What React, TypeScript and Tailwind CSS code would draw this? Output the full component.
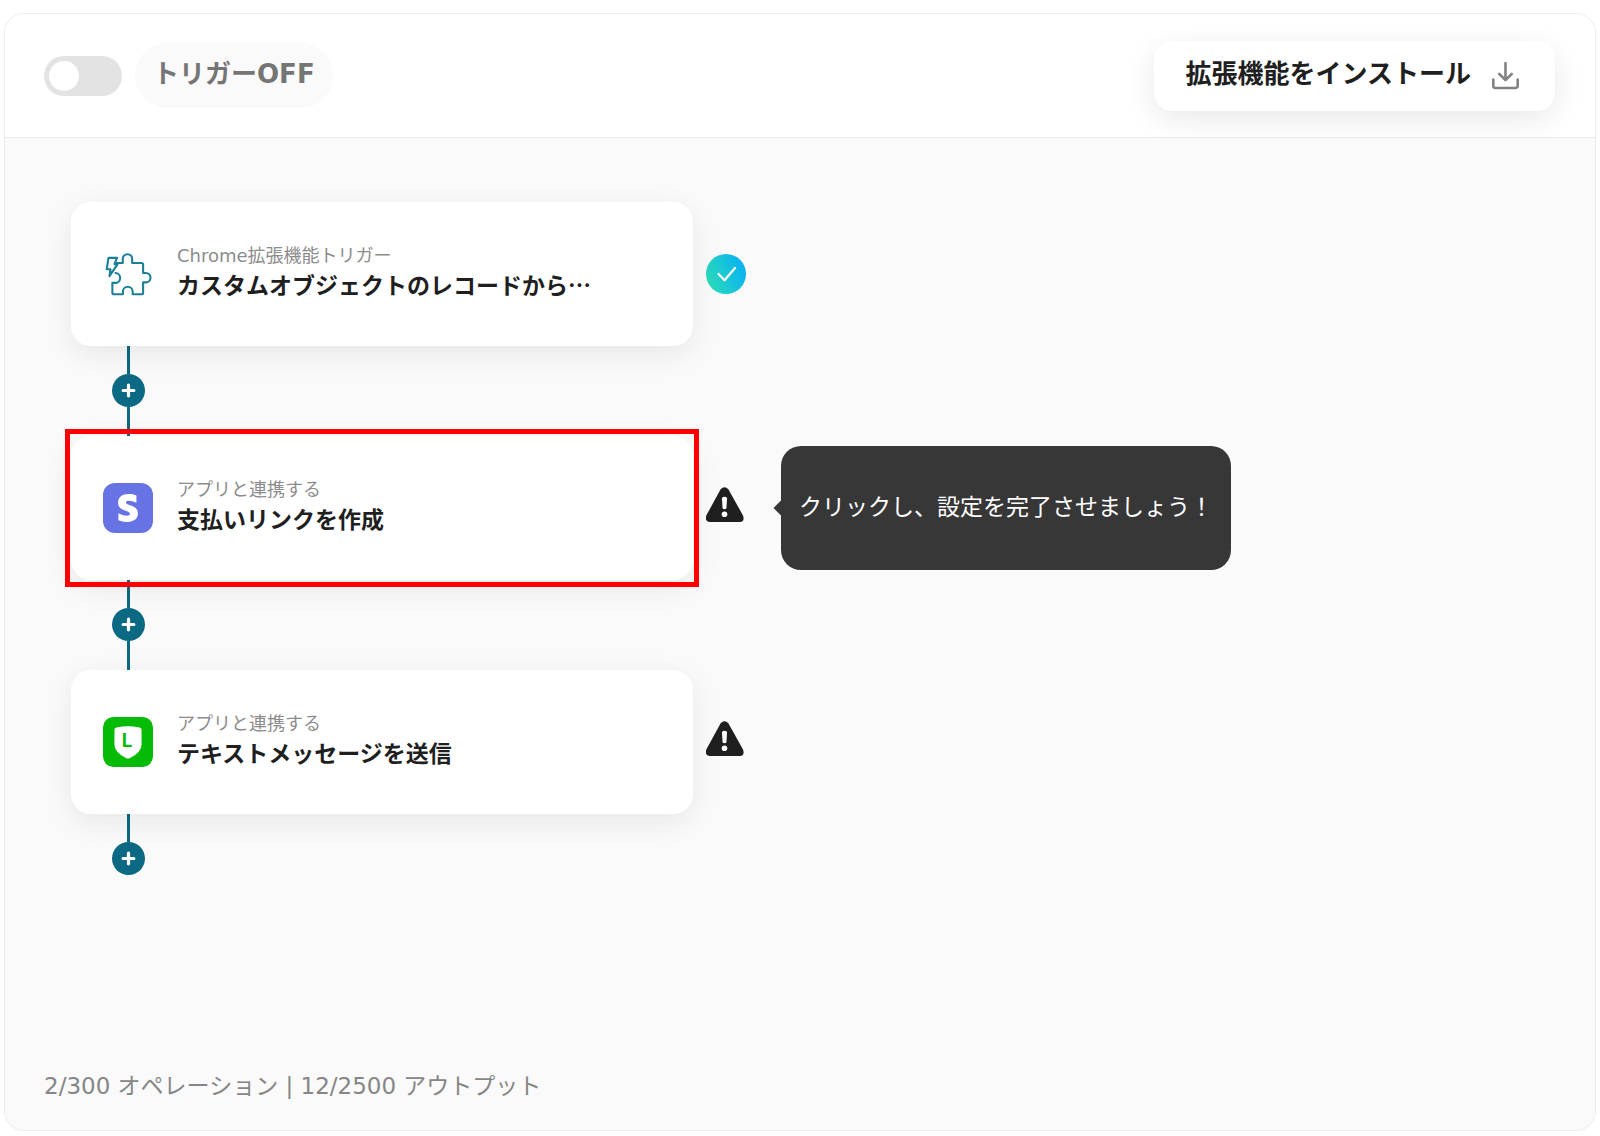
import { useState } from 'react'
import type { ReactNode } from 'react'
import { FaStripeS } from 'react-icons/fa6'

type Step = {
  id: string
  kind: string
  title: string
  icon: ReactNode
  done?: boolean
  selected?: boolean
  hint?: string
}

const STEPS: Step[] = [
  {
    id: 'trigger',
    kind: 'Chrome拡張機能トリガー',
    title: 'カスタムオブジェクトのレコードから…',
    icon: <PuzzleIcon />,
    done: true,
  },
  {
    id: 'stripe',
    kind: 'アプリと連携する',
    title: '支払いリンクを作成',
    icon: (
      <span className="flex size-[50px] items-center justify-center rounded-xl bg-[#6772e5]">
        <FaStripeS className="size-7 text-white" />
      </span>
    ),
    selected: true,
    hint: 'クリックし、設定を完了させましょう！',
  },
  {
    id: 'line',
    kind: 'アプリと連携する',
    title: 'テキストメッセージを送信',
    icon: <ShieldIcon />,
  },
]

export default function App() {
  const [enabled, setEnabled] = useState(false)

  return (
    <div className="flex min-h-screen flex-col bg-white px-1 pt-[13px] pb-[5px] font-['DejaVu_Sans','Noto_Sans_CJK_JP',sans-serif]">
      <main className="flex flex-1 flex-col overflow-hidden rounded-[20px] border border-[#eeeeee] bg-[#fafafa]">
        <header className="flex h-[124px] items-center justify-between border-b border-[#ececec] bg-white pr-10 pl-[39px]">
          <div className="flex items-center gap-[13px]">
            <input
              id="trigger-switch"
              type="checkbox"
              role="switch"
              checked={enabled}
              onChange={(e) => setEnabled(e.target.checked)}
              className="h-10 w-[78px] cursor-pointer appearance-none rounded-full bg-[#e3e3e3] p-[5px] before:block before:size-[30px] before:rounded-full before:bg-white checked:bg-[#0b6983] checked:before:ml-auto"
            />
            <label
              htmlFor="trigger-switch"
              className="rounded-full bg-[#fafafa] px-[18px] pt-[13px] pb-4 text-[26px] leading-9 font-bold text-[#757575]"
            >
              トリガー{enabled ? 'ON' : 'OFF'}
            </label>
          </div>
          <button
            type="button"
            className="flex h-[70px] items-center gap-5 rounded-[18px] bg-white pr-9 pl-8 shadow-[0_8px_30px_rgba(0,0,0,0.09)]"
          >
            <span className="pb-[3px] text-[26px] leading-9 font-bold text-[#1f1f1f]">
              拡張機能をインストール
            </span>
            <DownloadIcon />
          </button>
        </header>

        <ol className="flex flex-col pt-16 pl-[66px]">
          {STEPS.map((step) => (
            <StepRow key={step.id} step={step} last={step.id === STEPS[STEPS.length - 1].id} />
          ))}
        </ol>

        <footer className="mt-auto px-[39px] pt-10 pb-[26px] text-[23px] leading-9 text-[#868686]">
          2/300 オペレーション | 12/2500 アウトプット
        </footer>
      </main>
    </div>
  )
}

function StepRow({ step, last }: { step: Step; last: boolean }) {
  return (
    <li>
      <div className="flex items-center">
        <div className="relative w-[622px]">
          <button
            type="button"
            className="flex h-36 w-full items-center gap-6 rounded-[20px] bg-white px-8 text-left shadow-[0_8px_30px_rgba(0,0,0,0.08)]"
          >
            <span className="flex size-[50px] shrink-0 items-center justify-center">
              {step.icon}
            </span>
            <span className="flex min-w-0 flex-col pb-2">
              <span className="text-[18px] leading-7 text-[#8c8c8c]">{step.kind}</span>
              <span className="font-['Noto_Sans_CJK_JP',sans-serif] text-[23px] leading-7 font-bold whitespace-nowrap text-[#1f1f1f]">
                {step.title}
              </span>
            </span>
          </button>
          {step.selected && (
            <span className="pointer-events-none absolute -inset-x-1.5 -inset-y-[7px] z-10 border-5 border-[#ff0000]" />
          )}
        </div>
        <span className="ml-[13px] flex w-10 justify-center">
          {step.done ? <DoneIcon /> : <WarningIcon />}
        </span>
        {step.hint && (
          <div
            role="tooltip"
            className="relative ml-[35px] flex h-[124px] items-center rounded-[20px] bg-[#373737] px-[18px] pb-0.5 text-[23px] whitespace-nowrap text-white"
          >
            <span className="absolute top-1/2 -left-[5px] size-3 -translate-y-1/2 rotate-45 bg-[#373737]" />
            {step.hint}
          </div>
        )}
      </div>
      <Connector last={last} />
    </li>
  )
}

/* Line below a card, with the button that inserts another step */
function Connector({ last }: { last: boolean }) {
  return (
    <div className="ml-10 flex h-[90px] w-[35px] flex-col items-center">
      <span className="h-7 w-[3px] bg-[#0b6983]" />
      <button
        type="button"
        aria-label="ステップを追加"
        className="flex size-[33px] items-center justify-center rounded-full bg-[#0b6983]"
      >
        <svg viewBox="0 0 14 14" className="size-[15px]" fill="none" stroke="#fff" strokeWidth="3">
          <path d="M7 2v10M2 7h10" strokeLinecap="round" />
        </svg>
      </button>
      {!last && <span className="w-[3px] flex-1 bg-[#0b6983]" />}
    </div>
  )
}

/* ---------- Icons ---------- */

function DownloadIcon() {
  return (
    <svg
      viewBox="0 0 28 28"
      className="size-7"
      fill="none"
      stroke="#828282"
      strokeWidth="2.6"
      strokeLinecap="round"
      strokeLinejoin="round"
    >
      <path d="M14.500 1v16.500M8.300 12l6.200 6 6.200-6" />
      <path d="M2.300 17.500v6.200a2.300 2.300 0 0 0 2.300 2.300h19.800a2.300 2.300 0 0 0 2.300-2.300v-6.200" />
    </svg>
  )
}

function PuzzleIcon() {
  return (
    <svg
      viewBox="0 0 48 48"
      className="size-[50px]"
      fill="none"
      stroke="#1a7f97"
      strokeWidth="2"
      strokeLinejoin="round"
      strokeLinecap="round"
    >
      <path d="M13 13.500h6v-4a4.500 4.500 0 0 1 9 0v4h9a1.500 1.500 0 0 1 1.500 1.500v8h2.600a4.500 4.500 0 0 1 0 9h-2.600v10a1.500 1.500 0 0 1-1.500 1.500h-8.500v-2.500a4.700 4.700 0 0 0-9.400 0v2.500h-8.600a1.500 1.500 0 0 1-1.500-1.500v-9.500h2.500a4.700 4.700 0 0 0 .5-9.400" />
      <path d="M5.300 8.500h8.200l-2.500 6h3l-7.800 11.500 1-6.500h-3.700z" />
    </svg>
  )
}

function ShieldIcon() {
  return (
    <svg viewBox="0 0 48 48" className="size-[50px]">
      <rect width="48" height="48" rx="10" fill="#06bb06" />
      <path
        d="M11 12.300Q11 10.400 13 10q11-2.400 22 0 2 .4 2 2.300v14.200q0 3.500-2.500 6.500-3.500 4-9 6.600-1.500.7-3 0-5.500-2.600-9-6.600-2.500-3-2.500-6.500z"
        fill="#fff"
      />
      <text
        x="18"
        y="29"
        fill="#06bb06"
        className="font-['Inter',sans-serif] text-[18px] font-bold"
      >
        L
      </text>
    </svg>
  )
}

function DoneIcon() {
  return (
    <svg viewBox="0 0 40 40" className="size-10">
      <defs>
        <linearGradient id="done" x1="0" y1="0.7" x2="1" y2="0.3">
          <stop offset="0" stopColor="#2bdcb8" />
          <stop offset="1" stopColor="#08b0f5" />
        </linearGradient>
      </defs>
      <circle cx="20" cy="20" r="20" fill="url(#done)" />
      <path
        d="M12.500 20l6 6.300L29 14"
        fill="none"
        stroke="#fff"
        strokeWidth="2.200"
        strokeLinecap="round"
        strokeLinejoin="round"
      />
    </svg>
  )
}

function WarningIcon() {
  return (
    <svg viewBox="0 0 40 44" className="h-11 w-10">
      <path
        d="M14.500 3.500Q18.500 -1 22.500 3.500L37 29.500Q39 35.500 34 36H3.500Q-1.500 35.500.3 29.500z"
        fill="#1f1f1f"
      />
      <path d="M15.900 12Q18.500 9.500 21.100 12L20.400 22.500Q18.500 24 16.600 22.500z" fill="#fff" />
      <circle cx="18.500" cy="28.300" r="2.800" fill="#fff" />
    </svg>
  )
}
